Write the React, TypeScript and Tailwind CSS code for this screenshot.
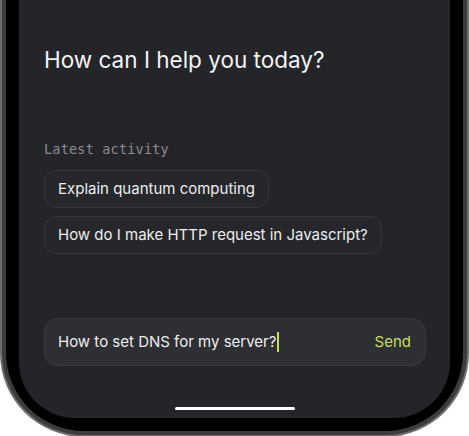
export default function App() {
  const font = { fontFamily: "Inter, 'Noto Sans', sans-serif" };
  return (
    <div className="h-[436px] w-[469px] overflow-hidden bg-white" style={font}>
      {/* phone frame, top is cut off */}
      <div className="rounded-b-[84px] bg-[#6e6e70] px-[2px] pb-[2px]">
        <div className="rounded-b-[82px] bg-[#3c3c3e] px-[4px] pb-[4px]">
          <div className="rounded-b-[78px] bg-black px-[13px] pb-[13px]">
            <div className="flex h-[418px] flex-col rounded-b-[56px] bg-[#242529] pr-[24px] pl-[25px]">
              <h1 className="mt-[46px] text-[22.5px] leading-[28px] font-normal text-[#f2f2f3]">
                How can I help you today?
              </h1>

              <p
                className="mt-[66px] text-[13.5px] leading-[18px] tracking-[0.2px] text-[#8b8c90]"
                style={{ fontFamily: "'DejaVu Sans Mono', 'Liberation Mono', monospace" }}
              >
                Latest activity
              </p>

              <div className="mt-[12px] flex flex-col items-start gap-[8px]">
                <button className="h-[38px] rounded-[12px] border border-[#36373b] bg-[#26272b] px-[13px] text-[15px] text-[#ededee]">
                  Explain quantum computing
                </button>
                <button className="h-[38px] rounded-[12px] border border-[#36373b] bg-[#26272b] px-[13px] text-[15px] text-[#ededee]">
                  How do I make HTTP request in Javascript?
                </button>
              </div>

              <div className="mt-[64px] flex h-[48px] items-center rounded-[14px] border border-[#393a3e] bg-[#2e2f33] pr-[14px] pl-[13px]">
                <span className="text-[15px] text-[#ededee]">How to set DNS for my server?</span>
                <span className="ml-[1px] h-[20px] w-[1.5px] bg-[#c6df5c]" />
                <span className="ml-auto text-[15px] text-[#c6df5c]">Send</span>
              </div>

              <div className="mt-auto mb-[8px] flex justify-center">
                <div className="h-[3px] w-[120px] rounded-full bg-white" />
              </div>
            </div>
          </div>
        </div>
      </div>
    </div>
  );
}
